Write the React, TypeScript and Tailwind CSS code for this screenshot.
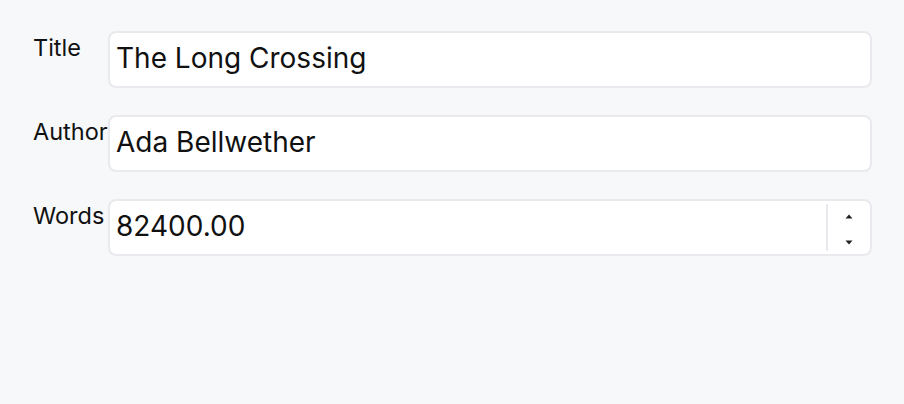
import React from 'react';

const fields = [
  { label: 'Title', value: 'The Long Crossing' },
  { label: 'Author', value: 'Ada Bellwether' },
];

export default function App() {
  return (
    <div
      className="min-h-[404px] w-full bg-[#f7f8fa] pl-[33px] pr-[32px] pt-[31px] text-[#111]"
      style={{ fontFamily: 'Inter, "Noto Sans", sans-serif' }}
    >
      <div className="grid grid-cols-[75px_1fr] gap-y-[27px]">
        {fields.map((f) => (
          <React.Fragment key={f.label}>
            <label className="pt-[3px] text-[23.5px] leading-[28px] whitespace-nowrap">{f.label}</label>
            <div className="flex h-[57px] items-center rounded-[8px] border-2 border-[#e9e9ee] bg-white pb-[4px] pl-[6px]">
              <span className="text-[28px] leading-[32px]">{f.value}</span>
            </div>
          </React.Fragment>
        ))}
        <label className="pt-[3px] text-[23.5px] leading-[28px] whitespace-nowrap">Words</label>
        <div className="flex h-[57px] items-stretch rounded-[8px] border-2 border-[#e9e9ee] bg-white">
          <div className="flex flex-1 items-center pb-[4px] pl-[6px]">
            <span className="text-[28px] leading-[32px]">82400.00</span>
          </div>
          <div className="my-[3px] w-[2px] bg-[#e9e9ee]" />
          <div className="flex w-[42px] flex-col items-center justify-center gap-[21px] pt-[4px]">
            <svg width="8" height="5" viewBox="0 0 8 5"><path d="M4 0.5 L7.5 4.5 H0.5 Z" fill="#222" /></svg>
            <svg width="8" height="5" viewBox="0 0 8 5"><path d="M0.5 0.5 H7.5 L4 4.5 Z" fill="#222" /></svg>
          </div>
        </div>
      </div>
    </div>
  );
}
